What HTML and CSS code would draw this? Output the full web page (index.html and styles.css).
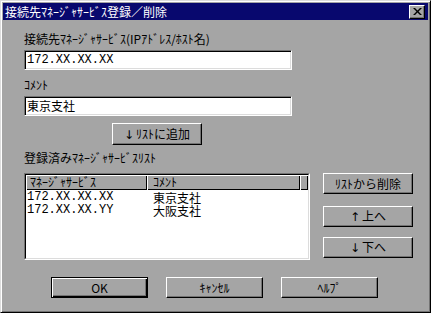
FILE: index.html
```html
<!DOCTYPE html>
<html lang="ja">
<head>
    <meta charset="UTF-8">
    <title>接続先ﾏﾈｰｼﾞｬｻｰﾋﾞｽ登録／削除</title>
    <link rel="stylesheet" href="styles.css">
</head>
<body>
    <div class="window">
        <div class="titlebar">
            <span class="title">接続先ﾏﾈｰｼﾞｬｻｰﾋﾞｽ登録／削除</span>
            <button class="close-btn" aria-label="閉じる">
                <svg width="9" height="7" viewBox="0 0 9 7">
                    <path d="M0 0h2l2.5 2.5L7 0h2L5.5 3.5 9 7H7L4.5 4.5 2 7H0l3.5-3.5z" fill="#000"/>
                </svg>
            </button>
        </div>

        <div class="content">
            <label class="field-label">接続先ﾏﾈｰｼﾞｬｻｰﾋﾞｽ(IPｱﾄﾞﾚｽ/ﾎｽﾄ名)</label>
            <div class="textbox mono">172.XX.XX.XX</div>

            <label class="field-label label-comment">ｺﾒﾝﾄ</label>
            <div class="textbox">東京支社</div>

            <button class="btn add-btn"><span class="arrow">↓</span>ﾘｽﾄに追加</button>

            <label class="field-label label-list">登録済みﾏﾈｰｼﾞｬｻｰﾋﾞｽﾘｽﾄ</label>

            <div class="list-row">
                <div class="listview">
                    <div class="list-inner">
                        <div class="list-header">
                            <div class="col-head col-host">ﾏﾈｰｼﾞｬｻｰﾋﾞｽ</div>
                            <div class="col-head col-comment">ｺﾒﾝﾄ</div>
                            <div class="col-head col-fill"></div>
                        </div>
                        <!-- report-view columns, one line per entry -->
                        <div class="list-body">
                            <div class="cell-host mono">172.XX.XX.XX<br>172.XX.XX.YY</div>
                            <div class="cell-comment">東京支社<br>大阪支社</div>
                        </div>
                    </div>
                </div>

                <div class="side-buttons">
                    <button class="btn side-btn">ﾘｽﾄから削除</button>
                    <button class="btn side-btn btn-up"><span class="arrow">↑</span>上へ</button>
                    <button class="btn side-btn btn-down"><span class="arrow">↓</span>下へ</button>
                </div>
            </div>

            <div class="footer">
                <button class="btn footer-btn default">OK</button>
                <button class="btn footer-btn">ｷｬﾝｾﾙ</button>
                <button class="btn footer-btn">ﾍﾙﾌﾟ</button>
            </div>
        </div>
    </div>
</body>
</html>
```

FILE: styles.css
```css
:root {
    --face: #a5a5a5;
    --light: #dcdcdc;
    --shadow: #737373;
    --title: #08086e;
}

* {
    margin: 0;
    padding: 0;
    box-sizing: border-box;
}

body {
    width: 431px;
    height: 313px;
    overflow: hidden;
    background-color: var(--face);
    font-family: "Noto Sans CJK JP", sans-serif;
    font-size: 12px;
    color: #000;
}

.mono {
    font-family: "Liberation Mono", monospace;
}

.window {
    width: 431px;
    height: 313px;
    padding: 2px;
    background-color: var(--face);
    border: 1px solid;
    border-color: var(--light) #000 #000 var(--light);
    box-shadow: inset 1px 1px #fff, inset -1px -1px var(--shadow);
    display: flex;
    flex-direction: column;
}

/* title bar */
.titlebar {
    height: 17px;
    padding: 0 3px 0 2px;
    background-color: var(--title);
    display: flex;
    align-items: center;
    justify-content: space-between;
}

.title {
    color: #fff;
    line-height: 17px;
}

.close-btn {
    width: 16px;
    height: 14px;
    background-color: var(--face);
    border: 1px solid;
    border-color: #fff #000 #000 #fff;
    box-shadow: inset -1px -1px var(--shadow);
    display: flex;
    align-items: center;
    justify-content: center;
}

/* form */
.content {
    flex: 1;
    padding: 12px 0 0 21px;
    display: flex;
    flex-direction: column;
    align-items: flex-start;
}

.field-label {
    display: block;
    height: 14px;
    line-height: 14px;
}

.label-comment {
    margin-top: 8px;
}

.label-list {
    margin-top: 6px;
}

.textbox {
    width: 268px;
    height: 20px;
    margin-top: 4px;
    padding-left: 2px;
    line-height: 18px;
    background-color: #fff;
    border: 1px solid;
    border-color: var(--shadow) #fff #fff var(--shadow);
    box-shadow: inset 1px 1px #000, inset -1px -1px var(--light);
}

.btn {
    height: 21px;
    background-color: var(--face);
    border: 1px solid;
    border-color: #fff #000 #000 #fff;
    box-shadow: inset -1px -1px var(--shadow);
    font-family: "Noto Sans CJK JP", sans-serif;
    font-size: 12px;
    line-height: 18px;
    color: #000;
}

.arrow {
    font-family: "DejaVu Sans", sans-serif;
    margin-right: 2px;
}

.add-btn {
    width: 90px;
    height: 22px;
    margin: 7px 0 0 88px;
}

/* registered list */
.list-row {
    margin-top: 8px;
    display: flex;
    gap: 13px;
}

.listview {
    width: 286px;
    height: 87px;
    border: 1px solid;
    border-color: var(--shadow) #fff #fff var(--shadow);
}

.list-inner {
    height: 100%;
    background-color: #fff;
    border: 1px solid;
    border-color: #000 var(--light) var(--light) #000;
}

.list-header {
    height: 15px;
    display: flex;
    margin-bottom: 1px;
}

.col-head {
    height: 15px;
    padding-left: 4px;
    line-height: 14px;
    background-color: var(--face);
    box-shadow: inset 1px 1px #fff, inset -1px -1px #000;
}

.col-host {
    width: 121px;
}

.col-comment {
    width: 153px;
    padding-left: 6px;
}

.col-fill {
    flex: 1;
}

.list-body {
    display: flex;
    line-height: 13px;
}

.cell-host {
    width: 121px;
    padding-left: 1px;
}

.cell-comment {
    padding-left: 6px;
}

.side-buttons {
    display: flex;
    flex-direction: column;
}

.side-btn {
    width: 90px;
}

.btn-up {
    margin-top: 12px;
}

.btn-down {
    margin-top: 10px;
}

/* dialog buttons */
.footer {
    margin-top: 17px;
    padding-left: 27px;
    display: flex;
    gap: 18px;
}

.footer-btn {
    width: 97px;
}

.footer-btn.default {
    border-color: #000;
    box-shadow: inset 1px 1px #fff, inset -1px -1px #000, inset -2px -2px var(--shadow);
}
```
